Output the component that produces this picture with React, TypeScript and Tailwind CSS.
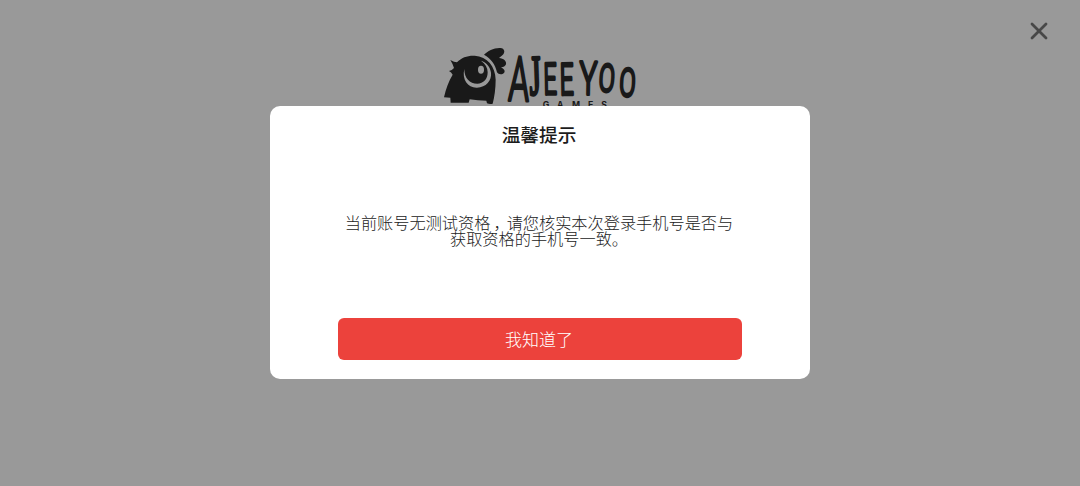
import { X } from "lucide-react";

// Each letter of the wordmark sits on its own tilted, squeezed baseline.
const letters = [
    { char: "A", transform: "translate(219 181) rotate(2) scale(0.54 1)", size: 184 },
    {
        char: "J",
        transform: "translate(285 164) rotate(-2) scale(0.52 1)",
        size: 170,
        font: "font-['Liberation_Serif']",
    },
    { char: "E", transform: "translate(326 163) rotate(-1) scale(0.54 1)", size: 130 },
    { char: "E", transform: "translate(375 164) rotate(-1) scale(0.56 1)", size: 131 },
    { char: "Y", transform: "translate(433 163) rotate(1) scale(0.64 1)", size: 138 },
    { char: "O", transform: "translate(489 153) rotate(4) scale(0.62 1)", size: 114 },
    { char: "O", transform: "translate(551 167) rotate(3) scale(0.62 1)", size: 116 },
];

const games = [
    { char: "G", x: 323 },
    { char: "A", x: 366 },
    { char: "M", x: 411 },
    { char: "E", x: 459 },
    { char: "S", x: 499 },
];

function Logo() {
    return (
        <svg
            viewBox="0 0 630 225"
            className="block h-[75px] w-[210px] shrink-0 fill-[#191919]"
        >
            <path d="M27 172 C33 145 41 124 53 104 Q49 97 42 93 Q51 91 57 84 Q53 71 46 60 Q58 67 66 67 C80 52 98 46 119 47 C157 50 181 78 182 119 C182 146 178 171 173 191 Q164 194 156 190 L154 182 Q128 182 104 178 L101 188 L47 188 L46 173 Z" />
            <path d="M147 44 C158 33 177 23 196 24 C209 25 212 37 202 46 L192 54 C206 55 215 63 213 73 C210 81 201 83 195 81 C207 85 212 93 207 99 C201 105 190 104 186 97 C181 72 168 56 147 44 Z" />
            <path
                d="M88 87 C80 119 99 144 126 143 C153 142 171 121 168 98 C165 80 155 67 138 62 C151 72 158 83 158 97 C158 118 145 131 127 131 C104 131 88 115 88 87 Z"
                className="fill-[#999999]"
            />
            <ellipse cx="138" cy="89" rx="9" ry="12" className="fill-[#999999]" />
            <g className="stroke-[#191919] stroke-[10] [stroke-linejoin:round]">
                {letters.map(({ char, transform, size, font }, index) => (
                    <text
                        key={index}
                        transform={transform}
                        fontSize={size}
                        className={font ?? "font-['Roboto'] font-light"}
                    >
                        {char}
                    </text>
                ))}
            </g>
            <g className="font-['Inter'] text-[26px] font-bold">
                {games.map(({ char, x }) => (
                    <text key={char} x={x} y="203">
                        {char}
                    </text>
                ))}
            </g>
        </svg>
    );
}

function Dialog() {
    return (
        <section className="z-10 -mt-[9px] flex h-[273px] w-[540.5px] flex-col items-center rounded-[10px] bg-white">
            <h1 className="mt-[16px] mr-[2px] text-[18.7px] leading-[24px] font-medium text-[#1c1c1c]">
                温馨提示
            </h1>
            <p className="mt-[68px] mr-[2px] w-[392px] text-center text-[16.2px] leading-[16px] font-light text-[#222222]">
                当前账号无测试资格<span className="relative left-[3px]">，</span>
                请您核实本次登录手机号是否与
                <br />
                获取资格的手机号一致。
            </p>
            <button className="mt-auto mb-[19px] h-[42px] w-[404.5px] rounded-md bg-[#ec423c] pr-[2px] pb-[2px] text-[17px] leading-none font-light text-white">
                我知道了
            </button>
        </section>
    );
}

export default function App() {
    return (
        <main className="relative flex h-[486px] w-full flex-col items-center overflow-hidden bg-[#999999] pt-[40px] font-['Noto_Sans_CJK_SC',sans-serif]">
            <button aria-label="关闭" className="absolute top-[17px] right-[27px] text-[#484848]">
                <X size={28} strokeWidth={2.4} />
            </button>
            <Logo />
            <Dialog />
        </main>
    );
}
